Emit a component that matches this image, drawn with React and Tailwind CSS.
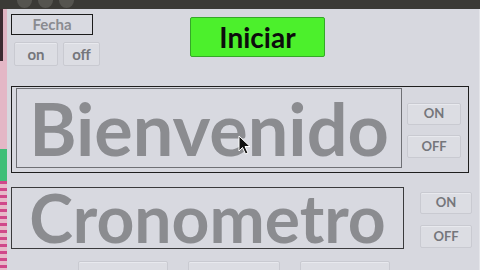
import React from 'react';

const font = { fontFamily: 'Lato, "Open Sans", sans-serif' };

function SmallButton({ children, className = '' }) {
  return (
    <div
      className={`flex items-center justify-center rounded-[2px] border border-[#c9cad1] bg-[#dcdde3] font-bold text-[#75767b] shadow-[inset_0_1px_0_#e8e9ee] ${className}`}
    >
      {children}
    </div>
  );
}

function Cursor() {
  return (
    <svg className="absolute left-[238px] top-[135px]" width="14" height="20" viewBox="0 0 14 20">
      <path d="M1 1 L1 16 L4.5 12.5 L7.5 19 L10 18 L7 11.5 L12 11.5 Z" fill="#111" stroke="#fff" strokeWidth="1" />
    </svg>
  );
}

export default function App() {
  return (
    <div className="relative flex h-[270px] w-[480px] flex-col overflow-hidden bg-[#d7d8df]" style={font}>
      {/* title bar */}
      <div className="flex h-[9px] shrink-0 items-end gap-[6px] bg-[#3b3a36] pl-[17px]">
        <div className="mb-[1px] h-[8px] w-[15px] rounded-b-full bg-[#55544f]" />
        <div className="mb-[1px] h-[8px] w-[15px] rounded-b-full bg-[#55544f]" />
        <div className="mb-[1px] h-[8px] w-[15px] rounded-b-full bg-[#55544f]" />
      </div>

      <div className="flex flex-1">
        {/* desktop strip on the left */}
        <div className="flex w-[7px] shrink-0 flex-col bg-[#e4b7c6]">
          <div className="h-[52px] bg-[linear-gradient(90deg,#3c2a30_0,#3c2a30_3px,#e0b3c2_3px)]" />
          <div className="h-[88px]" />
          <div className="h-[32px] bg-[#3fbf78]" />
          <div className="flex-1 bg-[repeating-linear-gradient(180deg,#d0488a_0,#d0488a_3px,#e7b9c9_3px,#e7b9c9_7px)]" />
        </div>

        {/* window */}
        <div className="flex flex-1 flex-col border-r border-[#e4e5ea] pl-[4px]">
          <div className="flex h-[77px] shrink-0">
            <div className="flex w-[179px] flex-col pt-[5px]">
              <div className="flex h-[21px] w-[82px] items-center justify-center border border-[#1b1b1b] bg-[#d9dae1] text-[15px] font-bold text-[#8a8b90]">
                Fecha
              </div>
              <div className="mt-[7px] flex gap-[5px] pl-[3px]">
                <SmallButton className="h-[24px] w-[44px] text-[15px]">on</SmallButton>
                <SmallButton className="h-[24px] w-[37px] text-[15px]">off</SmallButton>
              </div>
            </div>
            <div className="pt-[8px]">
              <div className="flex h-[40px] w-[135px] items-center justify-center rounded-[2px] border border-[#35a828] bg-[#4cf02c] text-[28px] font-bold leading-none text-[#0c0c0c]">
                Iniciar
              </div>
            </div>
          </div>

          {/* Bienvenido frame */}
          <div className="flex h-[87px] w-[458px] items-start border border-[#1e1e1e]">
            <div className="ml-[4px] mt-[1px] flex h-[80px] w-[386px] items-center justify-center border border-[#6f7075] bg-[#d8d9e0] text-[72px] font-bold leading-none text-[#8b8c90]">
              Bienvenido
            </div>
            <div className="ml-[5px] mt-[16px] flex flex-col gap-[10px]">
              <SmallButton className="h-[22px] w-[54px] text-[13px]">ON</SmallButton>
              <SmallButton className="h-[23px] w-[54px] text-[13px]">OFF</SmallButton>
            </div>
          </div>

          {/* Cronometro frame */}
          <div className="mt-[14px] flex items-start">
            <div className="flex h-[62px] w-[393px] items-center justify-center border border-[#3a3a3c] bg-[#d8d9e0] text-[66px] font-bold leading-none text-[#8b8c90]">
              Cronometro
            </div>
            <div className="ml-[16px] mt-[5px] flex flex-col gap-[11px]">
              <SmallButton className="h-[22px] w-[52px] text-[13px]">ON</SmallButton>
              <SmallButton className="h-[23px] w-[52px] text-[13px]">OFF</SmallButton>
            </div>
          </div>

          {/* bottom buttons, cut off */}
          <div className="mt-[12px] flex gap-[20px] pl-[67px]">
            <SmallButton className="h-[20px] w-[90px]" />
            <SmallButton className="h-[20px] w-[92px]" />
            <SmallButton className="h-[20px] w-[90px]" />
          </div>
        </div>
      </div>

      <Cursor />
    </div>
  );
}
